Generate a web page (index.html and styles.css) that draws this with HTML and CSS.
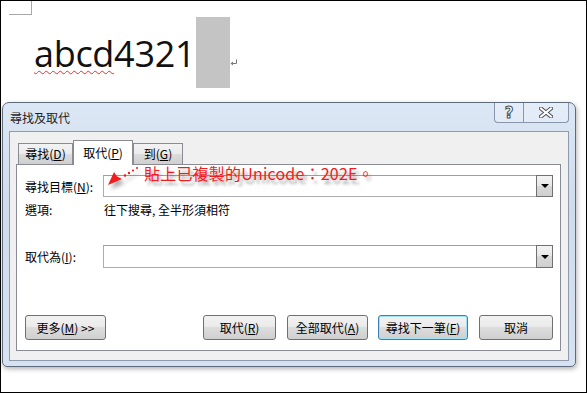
FILE: index.html
```html
<!DOCTYPE html>
<html lang="zh-Hant">
<head>
    <meta charset="UTF-8">
    <title>尋找及取代</title>
    <link rel="stylesheet" href="styles.css">
</head>
<body>
    <div class="page">
        <div class="corner"></div>
        <div class="doc-line">
            <span class="word"><span class="typo">abcd</span>4321</span>
            <span class="sel"></span>
            <svg class="para" width="8" height="8" viewBox="0 0 8 8">
                <path d="M6.5 0.5 V4.5 H1.5" fill="none" stroke="#7a7a7a" stroke-width="1"/>
                <path d="M0.5 4.5 L3 2.5 V6.5 Z" fill="#7a7a7a"/>
            </svg>
        </div>

        <div class="dialog">
            <div class="titlebar">
                <span class="title">尋找及取代</span>
                <div class="caption">
                    <span class="cap-btn help">?</span>
                    <span class="cap-btn close">
                        <svg width="14" height="11" viewBox="0 0 14 11">
                            <path d="M2 1.5 L12 9.5 M12 1.5 L2 9.5" stroke="#4a4f57" stroke-width="4" stroke-linecap="square"/>
                            <path d="M2 1.5 L12 9.5 M12 1.5 L2 9.5" stroke="#fff" stroke-width="2" stroke-linecap="square"/>
                        </svg>
                    </span>
                </div>
            </div>

            <div class="client">
                <div class="tabs">
                    <div class="tab t-find">尋找(<u>D</u>)</div>
                    <div class="tab t-replace active">取代(<u>P</u>)</div>
                    <div class="tab t-goto">到(<u>G</u>)</div>
                </div>
                <div class="panel">
                    <div class="row">
                        <span class="label">尋找目標(<u>N</u>):</span>
                        <div class="combo"><span class="drop"><i class="tri"></i></span></div>
                    </div>
                    <div class="row options">
                        <span class="label">選項:</span>
                        <span class="value">往下搜尋, 全半形須相符</span>
                    </div>
                    <div class="row replace-row">
                        <span class="label">取代為(<u>I</u>):</span>
                        <div class="combo"><span class="drop"><i class="tri"></i></span></div>
                    </div>
                    <div class="btn-row">
                        <button class="btn b-more">更多(<u>M</u>) &gt;&gt;</button>
                        <button class="btn b-replace">取代(<u>R</u>)</button>
                        <button class="btn b-all">全部取代(<u>A</u>)</button>
                        <button class="btn b-next default">尋找下一筆(<u>F</u>)</button>
                        <button class="btn b-cancel">取消</button>
                    </div>
                </div>
            </div>

            <!-- callout drawn over the dialog -->
            <svg class="note-arrow" width="40" height="28" viewBox="0 0 40 28">
                <path d="M4 21 L10 8 L13 12.5 L18 15 Z" fill="#f31c1c"/>
                <circle cx="21" cy="11.5" r="1.3" fill="#f31c1c"/>
                <circle cx="25" cy="9" r="1.2" fill="#f31c1c"/>
                <circle cx="29" cy="6.5" r="1.1" fill="#f31c1c"/>
                <circle cx="33" cy="4" r="1" fill="#f31c1c"/>
            </svg>
            <span class="note-text">貼上已複製的Unicode：202E。</span>
        </div>
    </div>
</body>
</html>
```

FILE: styles.css
```css
body {
    margin: 0;
    background: #fff;
    font-family: "Noto Sans CJK TC", "Liberation Sans", sans-serif;
}
.page {
    width: 587px;
    height: 393px;
    box-sizing: border-box;
    border: 1px solid #000;
    overflow: hidden;
}
.corner {
    width: 22px;
    height: 13px;
    margin-left: 8px;
    border-right: 1px solid #a8a8a8;
    border-bottom: 1px solid #a8a8a8;
}
.doc-line {
    display: flex;
    align-items: flex-start;
    height: 71px;
    margin-top: 2px;
    padding-left: 33px;
}
.word {
    font-family: "Open Sans", "Liberation Sans", sans-serif;
    font-size: 36px;
    line-height: 67px;
    padding-top: 3px;
    letter-spacing: -0.3px;
    color: #111;
}
.typo {
    text-decoration: underline wavy #e53030;
    text-decoration-thickness: 1px;
    text-underline-offset: 3px;
}
.sel {
    width: 34px;
    height: 71px;
    margin-left: 1px;
    background: #c4c4c4;
}
.para {
    margin-top: 42px;
}

/* dialog window */
.dialog {
    position: relative;
    width: 574px;
    box-sizing: border-box;
    margin: 14px 0 0 1px;
    padding: 0 6px 5px;
    border: 1px solid #5d6b7b;
    border-radius: 7px 7px 5px 5px;
    background: linear-gradient(#dce7f5, #cfdcec 40%, #d6e2f1);
    box-shadow: 1px 2px 5px rgba(0, 0, 0, 0.3);
}
.titlebar {
    display: flex;
    height: 28px;
}
.title {
    align-self: center;
    padding-left: 1px;
    font-size: 12px;
    color: #1e1e1e;
}
.caption {
    display: flex;
    height: 19px;
    margin-left: auto;
    border: 1px solid #8796aa;
    border-top: none;
    border-radius: 0 0 4px 4px;
    background: rgba(255, 255, 255, 0.25);
}
.cap-btn {
    display: flex;
    align-items: center;
    justify-content: center;
}
.cap-btn.help {
    width: 28px;
    border-right: 1px solid #8796aa;
    font: bold 15px "DejaVu Sans", sans-serif;
    color: #fff;
    -webkit-text-stroke: 1px #4a4f57;
}
.cap-btn.close {
    width: 44px;
}

.client {
    border: 1px solid #8e9bac;
    background: #f0f0f0;
    padding: 8px 7px 9px 6px;
}
.tabs {
    display: flex;
    align-items: flex-end;
    height: 24px;
    padding-left: 2px;
    position: relative;
    z-index: 1;
}
.tab {
    box-sizing: border-box;
    height: 21px;
    border: 1px solid #898c95;
    border-bottom: none;
    font-size: 12px;
    line-height: 20px;
    text-align: center;
    background: linear-gradient(#f3f3f3, #ebebeb 50%, #dddddd 50%, #cfcfcf);
}
.t-find { width: 55px; }
.t-replace { width: 60px; }
.t-goto { width: 50px; }
.tab.active {
    height: 25px;
    margin-bottom: -1px;
    line-height: 24px;
    background: #fff;
}

.panel {
    background: #fff;
    border: 1px solid #898c95;
    padding: 10px 7px 10px 8px;
}
.row {
    display: flex;
    align-items: center;
    font-size: 12px;
}
.label {
    width: 78px;
    flex-shrink: 0;
}
.combo {
    flex: 1;
    display: flex;
    justify-content: flex-end;
    height: 22px;
    box-sizing: border-box;
    border: 1px solid #abadb3;
    border-top-color: #9c9ea4;
    background: #fff;
}
.drop {
    display: flex;
    align-items: center;
    justify-content: center;
    width: 17px;
    box-sizing: border-box;
    margin: -1px -1px -1px 0;
    border: 1px solid #707070;
    background: linear-gradient(#f4f4f4, #e6e6e6 50%, #d8d8d8 50%, #cfcfcf);
}
.tri {
    width: 0;
    height: 0;
    border-left: 4px solid transparent;
    border-right: 4px solid transparent;
    border-top: 4px solid #000;
}
.options {
    height: 16px;
    margin-top: 5px;
    line-height: 16px;
}
.options .value {
    padding-left: 1px;
}
.replace-row {
    margin-top: 27px;
}
.replace-row .combo {
    height: 23px;
}

.btn-row {
    display: flex;
    margin-top: 47px;
}
.btn {
    height: 25px;
    box-sizing: border-box;
    padding: 0;
    border: 1px solid #707070;
    border-radius: 3px;
    background: linear-gradient(#f2f2f2, #ebebeb 45%, #dddddd 50%, #cfcfcf);
    font: 12px "Noto Sans CJK TC", sans-serif;
    color: #000;
}
.b-more { width: 81px; }
.b-replace { width: 73px; margin-left: auto; }
.b-all { width: 81px; margin-left: 11px; }
.b-next { width: 90px; margin-left: 10px; }
.b-cancel { width: 74px; margin-left: 11px; }
.btn.default {
    border-color: #3c7fb1;
    box-shadow: inset 0 0 0 1px #9fe3fb;
}
u {
    text-underline-offset: 1px;
}

/* red callout */
.note-arrow {
    position: absolute;
    left: 101px;
    top: 61px;
    filter: drop-shadow(3px 4px 2px rgba(0, 0, 0, 0.35));
}
.note-text {
    position: absolute;
    left: 141px;
    top: 62px;
    font-size: 16px;
    line-height: 16px;
    letter-spacing: 0.2px;
    color: #f31c1c;
    white-space: nowrap;
    text-shadow: 3px 4px 3px rgba(0, 0, 0, 0.35);
}
```
